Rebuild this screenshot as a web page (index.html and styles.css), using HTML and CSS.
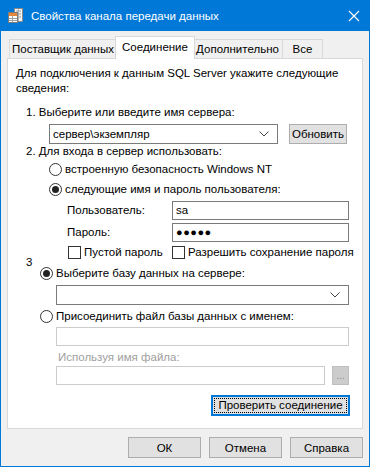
FILE: index.html
```html
<!DOCTYPE html>
<html lang="ru">
<head>
  <meta charset="UTF-8" />
  <title>Свойства канала передачи данных</title>
  <link rel="stylesheet" href="styles.css">
</head>
<body>

<div class="window">
  <div class="titlebar">
    <svg class="app-icon" width="16" height="16" viewBox="0 0 16 16">
      <rect x="6.5" y="0.5" width="8" height="13" fill="#f4f4f4" stroke="#8a8a8a"/>
      <line x1="8" y1="3" x2="13" y2="3" stroke="#9a9a9a"/>
      <line x1="8" y1="6" x2="13" y2="6" stroke="#9a9a9a"/>
      <line x1="8" y1="9" x2="13" y2="9" stroke="#9a9a9a"/>
      <line x1="10.5" y1="1" x2="10.5" y2="13" stroke="#b0b0b0"/>
      <rect x="0.5" y="4.5" width="9" height="10" fill="#fff" stroke="#7b7b7b"/>
      <rect x="1" y="5" width="8" height="3" fill="#e8863a"/>
      <line x1="1" y1="10.5" x2="9" y2="10.5" stroke="#a0a0a0"/>
      <line x1="1" y1="12.5" x2="9" y2="12.5" stroke="#a0a0a0"/>
      <line x1="4.5" y1="8" x2="4.5" y2="14" stroke="#a0a0a0"/>
    </svg>
    <span class="title">Свойства канала передачи данных</span>
    <svg class="close-icon" width="12" height="12" viewBox="0 0 12 12">
      <path d="M1 1 L11 11 M11 1 L1 11" stroke="#fff" stroke-width="1.2"/>
    </svg>
  </div>

  <div class="tabs">
    <div class="tab tab-provider">Поставщик данных</div>
    <div class="tab tab-active">Соединение</div>
    <div class="tab tab-advanced">Дополнительно</div>
    <div class="tab tab-all">Все</div>
  </div>

  <div class="panel">
    <div class="intro">Для подключения к данным SQL Server укажите следующие<br>сведения:</div>

    <div class="step step-1">1. Выберите или введите имя сервера:</div>
    <div class="server-row">
      <div class="combo combo-server">
        <span class="combo-text">сервер\экземпляр</span>
        <svg class="chevron" width="10" height="6" viewBox="0 0 10 6"><path d="M0.5 0.5 L5 5 L9.5 0.5" fill="none" stroke="#444"/></svg>
      </div>
      <div class="btn btn-refresh">Обновить</div>
    </div>

    <div class="step">2. Для входа в сервер использовать:</div>
    <div class="radio-row radio-row-login">
      <span class="radio"></span>
      <span>встроенную безопасность Windows NT</span>
    </div>
    <div class="radio-row radio-row-login">
      <span class="radio checked"></span>
      <span>следующие имя и пароль пользователя:</span>
    </div>
    <div class="field-row">
      <span class="field-label">Пользователь:</span>
      <div class="input">sa</div>
    </div>
    <div class="field-row">
      <span class="field-label">Пароль:</span>
      <div class="input password">●●●●●</div>
    </div>
    <div class="check-row">
      <span class="check-item check-blank"><span class="checkbox"></span>Пустой пароль</span>
      <span class="check-item"><span class="checkbox"></span>Разрешить сохранение пароля</span>
    </div>

    <div class="step step-3">3</div>
    <div class="radio-row radio-row-db">
      <span class="radio checked"></span>
      <span>Выберите базу данных на сервере:</span>
    </div>
    <div class="combo combo-db">
      <span class="combo-text"></span>
      <svg class="chevron" width="10" height="6" viewBox="0 0 10 6"><path d="M0.5 0.5 L5 5 L9.5 0.5" fill="none" stroke="#444"/></svg>
    </div>
    <div class="radio-row radio-row-db radio-attach">
      <span class="radio"></span>
      <span>Присоединить файл базы данных с именем:</span>
    </div>
    <div class="input disabled input-attach"></div>
    <div class="disabled-label">Используя имя файла:</div>
    <div class="file-row">
      <div class="input disabled input-file"></div>
      <div class="btn btn-browse">...</div>
    </div>
    <div class="test-row">
      <div class="btn btn-test"><span class="focus-rect">Проверить соединение</span></div>
    </div>
  </div>

  <div class="footer">
    <div class="btn btn-footer">ОК</div>
    <div class="btn btn-footer">Отмена</div>
    <div class="btn btn-footer">Справка</div>
  </div>
</div>

</body>
</html>
```

FILE: styles.css
```css
body {
  margin: 0;
  font-family: 'Liberation Sans', Arial, sans-serif;
  font-size: 11.5px;
  color: #000;
  background: #fff;
}

.window {
  width: 370px;
  height: 467px;
  box-sizing: border-box;
  border: 1px solid #0078d7;
  border-top: none;
  background: #f0f0f0;
  display: flex;
  flex-direction: column;
  white-space: nowrap;
}

/* Title bar */
.titlebar {
  height: 31px;
  background: #0078d7;
  color: white;
  display: flex;
  align-items: center;
  padding-left: 7px;
  flex-shrink: 0;
}

.app-icon {
  margin-right: 7px;
}

.title {
  flex: 1;
  font-size: 11.5px;
}

.close-icon {
  margin-right: 9px;
}

/* Tabs */
.tabs {
  display: flex;
  align-items: flex-end;
  height: 22px;
  margin: 5px 0 0 8px;
  position: relative;
  z-index: 1;
  flex-shrink: 0;
}

.tab {
  box-sizing: border-box;
  height: 19px;
  line-height: 18px;
  border: 1px solid #d9d9d9;
  border-bottom: none;
  background: #f0f0f0;
  text-align: center;
}

.tab + .tab {
  border-left: none;
}

.tab-provider { width: 108px; }
.tab-advanced { width: 90px; }
.tab-all { width: 40px; }

.tab-active {
  width: 80px;
  height: 23px;
  line-height: 20px;
  margin: 0 -2px -1px -2px;
  background: white;
  border-left: 1px solid #d9d9d9 !important;
  position: relative;
  z-index: 2;
}

/* Panel */
.panel {
  box-sizing: border-box;
  height: 371px;
  flex-shrink: 0;
  margin: 0 6px;
  background: white;
  border: 1px solid #d9d9d9;
  padding: 0 0 0 8px;
  line-height: 15px;
  overflow: hidden;
}

.intro {
  margin-top: 7px;
}

.step {
  padding-left: 10px;
}

.step-1 {
  margin-top: 9px;
}

.server-row {
  display: flex;
  margin: 4px 0 0 33px;
  height: 20px;
}

.combo {
  box-sizing: border-box;
  height: 20px;
  border: 1px solid #7a7a7a;
  background: white;
  display: flex;
  align-items: center;
  padding: 0 8px 0 3px;
}

.combo-text {
  flex: 1;
}

.combo-server {
  width: 229px;
}

.btn {
  box-sizing: border-box;
  background: #e1e1e1;
  border: 1px solid #adadad;
  display: flex;
  align-items: center;
  justify-content: center;
}

.btn-refresh {
  width: 58px;
  margin-left: 11px;
}

.radio-row {
  display: flex;
  align-items: center;
  height: 20px;
}

.radio-row-login {
  margin-left: 33px;
}

.radio-row-login:first-of-type {
  margin-top: 3px;
}

.radio {
  box-sizing: border-box;
  width: 13px;
  height: 13px;
  border: 1px solid #333;
  border-radius: 50%;
  margin-right: 3px;
  display: flex;
  align-items: center;
  justify-content: center;
  flex-shrink: 0;
}

.radio.checked::after {
  content: '';
  width: 7px;
  height: 7px;
  border-radius: 50%;
  background: #222;
}

.field-row {
  display: flex;
  align-items: center;
  height: 22px;
  margin-left: 51px;
}

.field-label {
  width: 105px;
}

.input {
  box-sizing: border-box;
  width: 177px;
  height: 19px;
  border: 1px solid #7a7a7a;
  background: white;
  padding-left: 3px;
  line-height: 17px;
}

.password {
  font-size: 11px;
  letter-spacing: 0.5px;
}

.check-row {
  display: flex;
  align-items: center;
  height: 17px;
  margin: 1px 0 0 52px;
}

.check-item {
  display: flex;
  align-items: center;
}

.check-blank {
  width: 104px;
}

.checkbox {
  box-sizing: border-box;
  width: 13px;
  height: 13px;
  border: 1px solid #333;
  background: white;
  margin-right: 3px;
  flex-shrink: 0;
}

.step-3 {
  height: 2px;
  line-height: 2px;
}

.radio-row-db {
  margin-left: 24px;
}

.combo-db {
  width: 293px;
  margin: 2px 0 0 40px;
}

.radio-attach {
  margin-top: 1px;
}

.input.disabled {
  border-color: #cccccc;
}

.input-attach {
  width: 293px;
  margin: 1px 0 0 40px;
}

.disabled-label {
  color: #a0a0a0;
  margin: 4px 0 0 42px;
}

.file-row {
  display: flex;
  margin: 1px 0 0 40px;
  height: 19px;
}

.input-file {
  width: 269px;
}

.btn-browse {
  width: 17px;
  height: 19px;
  margin-left: 7px;
  background: #cccccc;
  border-color: #bfbfbf;
  color: #8c8c8c;
  font-size: 10px;
}

.test-row {
  display: flex;
  justify-content: flex-end;
  margin: 10px 12px 0 0;
}

.btn-test {
  width: 139px;
  height: 21px;
  border: 2px solid #0078d7;
}

.focus-rect {
  box-sizing: border-box;
  width: 133px;
  height: 15px;
  border: 1px dotted #000;
  display: flex;
  align-items: center;
  justify-content: center;
}

/* Footer buttons */
.footer {
  display: flex;
  justify-content: flex-end;
  gap: 8px;
  margin: 8px 6px 0 0;
}

.btn-footer {
  width: 73px;
  height: 21px;
}
```
